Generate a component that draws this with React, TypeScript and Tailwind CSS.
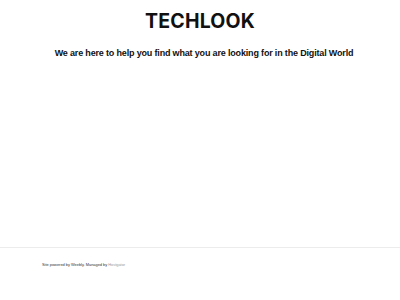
export default function App() {
  return (
    <div className="w-[400px] h-[300px] bg-white flex flex-col overflow-hidden" style={{ fontFamily: '"Liberation Sans", Arial, sans-serif' }}>
      <header className="flex justify-center pt-[10px]">
        <h1 className="text-[19.5px] leading-[22px] font-bold tracking-[0.01em] text-[#111]" style={{ fontFamily: 'Inter, "Liberation Sans", sans-serif' }}>
          TECHLOOK
        </h1>
      </header>
      <main className="flex-1 flex justify-center pt-[15px] pl-[8px]">
        <p className="text-[9px] leading-[12px] font-semibold tracking-[-0.17px] text-[#111]">
          We are here to help you find what you are looking for in the Digital World
        </p>
      </main>
      <footer className="h-[53px] border-t border-[#ececec] pl-[42px] pt-[14px]">
        <p className="text-[3.9px] leading-[6px] text-[#333]">
          Site powered by Weebly. Managed by <span className="text-[#999]">Hostgator</span>
        </p>
      </footer>
    </div>
  );
}
